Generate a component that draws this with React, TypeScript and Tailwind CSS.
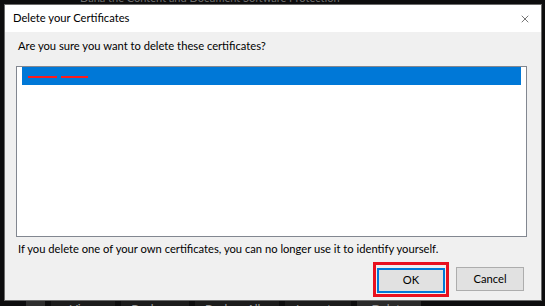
import { X } from 'lucide-react';

const FONT = { fontFamily: 'Lato, "Liberation Sans", Arial, sans-serif' };

const backButtons = [
  { label: 'View', w: 'w-[64px]', bg: 'bg-[#1c1c1c]' },
  { label: 'Backup...', w: 'w-[68px]', bg: 'bg-[#1c1c1c]' },
  { label: 'Backup All...', w: 'w-[84px]', bg: 'bg-[#1c1c1c]' },
  { label: 'Import...', w: 'w-[66px]', bg: 'bg-[#1c1c1c]' },
  { label: 'Delete', w: 'w-[64px]', bg: 'bg-[#2a2a2a]' },
];

export default function App() {
  return (
    <div className="flex h-[306px] w-[545px] flex-col overflow-hidden bg-[#0d0d0e]" style={FONT}>
      {/* window behind, title row peeking out */}
      <div className="h-[4px] overflow-hidden pl-[80px]">
        <p className="-mt-[8px] text-[11px] leading-[11px] text-[#6f6f6f]">
          Dana the Content and Document Software Protection
        </p>
      </div>

      {/* Dialog */}
      <div className="ml-[4px] flex h-[297px] w-[538px] flex-col border border-[#6b6b6b] bg-[#f0f0f0]">
        {/* Title bar */}
        <div className="flex h-[27px] shrink-0 items-center justify-between bg-white pl-[8px] pr-[10px]">
          <span className="text-[11.2px] text-black">Delete your Certificates</span>
          <X size={12} strokeWidth={1.2} className="text-[#1a1a1a]" />
        </div>

        {/* Body */}
        <div className="flex flex-1 flex-col pl-[13px] pr-[14px] pt-[6px]">
          <p className="text-[11.2px] leading-[16px] text-black">
            Are you sure you want to delete these certificates?
          </p>

          <div className="ml-[-2px] mt-[12px] h-[171px] w-[511px] border border-[#828790] bg-white px-[5px]">
            <div className="flex h-[18px] items-start gap-[4px] bg-[#0078d7] pl-[6px] pt-[9px]">
              <span className="h-[2px] w-[29px] bg-[#ff1a1a]" />
              <span className="h-[2px] w-[27px] bg-[#ff1a1a]" />
            </div>
          </div>

          <p className="mt-[4px] text-[11.2px] leading-[16px] text-black">
            If you delete one of your own certificates, you can no longer use it to identify yourself.
          </p>

          <div className="mt-[5px] flex items-center justify-end gap-[7px] pr-[3px]">
            <div className="border-[3px] border-[#e8101e] p-[1px]">
              <button className="h-[25px] w-[68px] border-2 border-[#0078d7] bg-[#e1e1e1] text-[11.2px] text-black">
                OK
              </button>
            </div>
            <button className="h-[24px] w-[68px] border border-[#adadad] bg-[#e1e1e1] text-[11.2px] text-black">
              Cancel
            </button>
          </div>
        </div>
      </div>

      {/* window behind, button row peeking out */}
      <div className="flex h-[5px] gap-[6px] overflow-hidden pl-[26px]">
        <div className="w-[19px] bg-[#2e2e2e]" />
        {backButtons.map((b) => (
          <div key={b.label} className={`${b.w} ${b.bg} overflow-hidden text-center`}>
            <p className="mt-[2px] text-[12px] leading-[12px] text-[#9a9a9a]">{b.label}</p>
          </div>
        ))}
      </div>
    </div>
  );
}
